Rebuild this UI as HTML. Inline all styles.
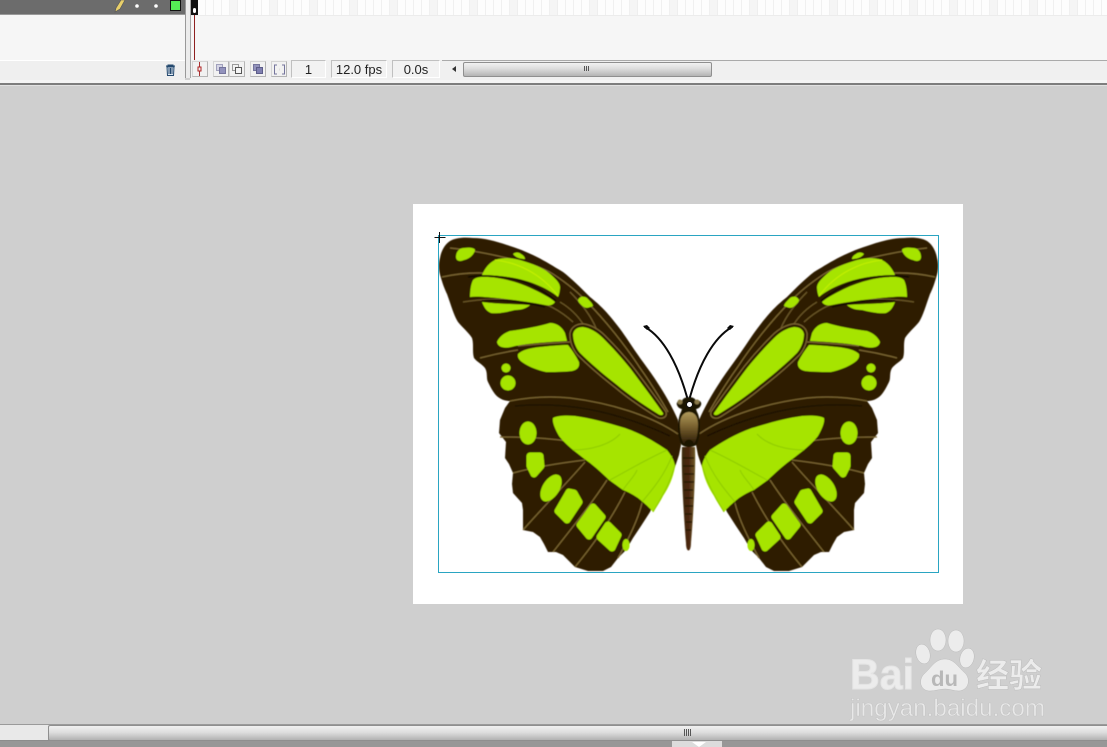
<!DOCTYPE html>
<html><head><meta charset="utf-8"><style>
html,body{margin:0;padding:0;width:1107px;height:747px;overflow:hidden;background:#cfcfcf;font-family:"Liberation Sans","Noto Sans CJK SC",sans-serif}
div{position:absolute;box-sizing:border-box}
.btn{top:61px;height:16px;width:16px;background:#f1f1f1;border:1px solid #d4d4d4;border-bottom-color:#b4b4b4;border-right-color:#b4b4b4}
.fld{top:60px;height:18px;background:#f2f2f2;border:1px solid #c0c0c0;border-right-color:#fff;border-bottom-color:#fff;font-size:13px;line-height:18px;text-align:center;color:#222}
</style></head><body>
<div style="left:0;top:0;width:1107px;height:61px;background:#f6f6f6"></div>
<div style="left:0;top:0;width:185px;height:15px;background:#6c6c6c;border-bottom:1px solid #999"></div>
<div style="left:190px;top:0;width:917px;height:15px;background:repeating-linear-gradient(90deg,#fdfdfd 0 7px,#f0f0f0 7px 8px)"></div>
<div style="left:198px;top:0;width:909px;height:15px;background:repeating-linear-gradient(90deg,transparent 0 32px,rgba(235,235,235,.45) 32px 40px)"></div>
<div style="left:190px;top:15px;width:917px;height:1px;background:#ececec"></div>
<div style="left:191px;top:0;width:7px;height:15px;background:#111"></div>
<div style="left:193px;top:8px;width:3px;height:5px;border-radius:2px;background:#fff"></div>
<div style="left:194px;top:15px;width:1px;height:45px;background:#8e2020"></div>
<div style="left:0;top:60px;width:185px;height:1px;background:#fff"></div>
<div style="left:0;top:61px;width:185px;height:19px;background:#efefef"></div>
<div style="left:190px;top:60px;width:917px;height:20px;background:#f0f0f0"></div>
<div style="left:442px;top:60px;width:665px;height:1px;background:#aaa"></div>
<div style="left:185px;top:0;width:1px;height:78px;background:#999"></div>
<div style="left:186px;top:0;width:4px;height:78px;background:#ececec"></div>
<div style="left:190px;top:0;width:1px;height:78px;background:#a8a8a8"></div>
<div style="left:0;top:80px;width:1107px;height:3px;background:#f5f5f5"></div>
<div style="left:0;top:83px;width:1107px;height:2px;background:#7e7e7e"></div>
<div style="left:0;top:85px;width:1107px;height:1px;background:#e2e2e2"></div>
<div class="btn" style="left:192px"></div>
<div class="btn" style="left:213px"></div>
<div class="btn" style="left:229px"></div>
<div class="btn" style="left:250px"></div>
<div class="btn" style="left:271px"></div>
<div class="fld" style="left:291px;width:35px">1</div>
<div class="fld" style="left:331px;width:56px">12.0 fps</div>
<div class="fld" style="left:392px;width:48px">0.0s</div>
<div style="left:463px;top:62px;width:249px;height:15px;border:1px solid #8f8f8f;border-radius:2px;background:linear-gradient(#f2f2f2,#dcdcdc 45%,#b4b4b4)"></div>
<div style="left:0;top:724px;width:1107px;height:17px;background:#e9e9e9;border-top:1px solid #9a9a9a;border-bottom:1px solid #8c8c8c"></div>
<div style="left:48px;top:725px;width:1059px;height:16px;border:1px solid #8f8f8f;border-right:0;border-radius:2px 0 0 2px;background:linear-gradient(#f0f0f0,#dedede 45%,#b2b2b2)"></div>
<div style="left:0;top:741px;width:1107px;height:6px;background:#979797"></div>
<div style="left:672px;top:741px;width:50px;height:6px;background:#dcdcdc"></div>
<svg width="1107" height="747" viewBox="0 0 1107 747" style="position:absolute;left:0;top:0">
<defs>
<filter id="soft" x="-5%" y="-5%" width="110%" height="110%"><feGaussianBlur stdDeviation="0.45"/></filter>
<g id="wing">
<path fill="#2e1e06" d="M678 420C670 402 660 385 643 362 632 347 625 335 617 325 607 312 600 305 590 297 580 287 572 279 563 272 553 266 545 261 537 257 527 252 517 248 507 245 495 241 484 238 473 238 463 237 455 238 450 241 444 245 441 252 440 258 438 265 439 272 441 278 443 285 445 290 447 294 451 305 454 316 458 322 463 328 469 333 472 338 474 344 472 352 474 358 477 362 482 364 485 368 488 373 486 378 488 382 491 388 494 394 498 397 502 400 506 401 510 401L505 408 500 420 499 433 506 442 505 458 509 464 513 473 512 484 513 493 522 503 523 510 523 530 533 532 540 537 544 544 548 552 556 552 563 555 569 561 575 567 588 571 603 571 611 567 618 558 626 550 633 538 641 526 650 512 660 492 675 467 679 455 681 445Z"/>
<g fill="none" stroke="#7a6530" stroke-width="1.300">
<path d="M510 401C530 397 550 396 570 398 610 403 650 415 678 434"/>
<path d="M515 406C560 402 610 408 670 436" stroke="#1a1002"/>
<path d="M442 277C460 273 480 272 497 274"/>
<path d="M450 248C470 250 490 254 507 258 525 262 540 266 553 274 565 282 578 292 587 302 605 320 625 345 640 368 650 382 660 398 668 412"/>
<path d="M463 302C480 299 510 298 530 300 548 303 562 312 573 322" stroke="#6a5628"/>
<path d="M560 302C570 308 578 316 583 324M570 292C580 302 590 314 596 328" stroke="#6a5628"/>
<path d="M480 358C495 354 505 352 518 350"/>
<path d="M518 346C535 344 552 343 570 342"/>
<path d="M500 437C525 437 550 438 573 442"/>
<path d="M513 473C535 467 560 463 585 460"/>
<path d="M523 530C545 505 568 482 585 462"/>
<path d="M553 552C572 528 592 503 607 480"/>
<path d="M575 567C593 545 612 518 625 492"/>
<path d="M618 558C628 540 638 520 642 503"/>
</g>
<g fill="none" stroke="#120a00" stroke-width="1.700">
<path d="M468 277C500 272 530 279 556 301"/>
<path d="M482 301C500 299 520 301 545 307"/>
</g>
<path fill="none" stroke="#7a6530" stroke-width="7.500" stroke-linejoin="round" d="M573 334C574 329 578 327 583 327 590 328 597 332 603 338 612 347 622 358 630 368 642 384 654 400 663 413 664 415 661 416 658 414 645 406 630 396 617 385 604 375 590 363 580 353 575 347 573 340 573 334Z"/>
<path fill="none" stroke="#2e1e06" stroke-width="5" stroke-linejoin="round" d="M573 334C574 329 578 327 583 327 590 328 597 332 603 338 612 347 622 358 630 368 642 384 654 400 663 413 664 415 661 416 658 414 645 406 630 396 617 385 604 375 590 363 580 353 575 347 573 340 573 334Z"/>
<g fill="#a6e400">
<path d="M456 257C456 252 459 248 464 248 469 247 475 248 475 250 474 255 469 259 464 260 460 262 456 261 456 257Z"/>
<path d="M513 254C515 252 519 252 521 254 523 255 525 257 525 259 521 259 516 258 513 254Z"/>
<path d="M482 275C485 268 489 263 495 260 503 257 512 258 520 260 533 264 543 268 549 273 555 278 560 283 560 287 560 291 559 295 558 297 552 292 545 288 535 284 520 278 500 275 482 275Z"/>
<path d="M470 297C470 290 471 284 473 280 476 277 480 277 485 277 500 277 520 282 537 291 545 295 552 299 555 302 553 305 550 306 545 305 530 302 515 300 497 298 485 297 477 296 470 297Z"/>
<path d="M482 302C497 304 515 304 530 305 527 308 522 310 515 310 507 312 497 314 491 313 486 311 484 307 482 302Z"/>
<path d="M578 300C580 296 584 296 587 298 590 301 593 304 593 306 590 307 587 309 584 307 581 305 578 302 578 300Z"/>
<path d="M497 342C499 337 504 333 510 331 525 329 540 326 550 323 557 323 562 327 565 333L567 341C550 342 530 343 515 346 506 349 498 348 497 342Z"/>
<path d="M518 354C522 350 530 348 540 347 550 346 560 345 568 345 572 350 576 356 579 362 580 367 577 370 572 371 563 372 553 372 546 372 537 370 530 367 525 364 520 361 517 358 518 354Z"/>
<path d="M573 334C574 329 578 327 583 327 590 328 597 332 603 338 612 347 622 358 630 368 642 384 654 400 663 413 664 415 661 416 658 414 645 406 630 396 617 385 604 375 590 363 580 353 575 347 573 340 573 334Z"/>
<ellipse cx="506" cy="368" rx="4.500" ry="4.500"/>
<ellipse cx="508" cy="383" rx="7.500" ry="7.500"/>
<path d="M553 418C556 416 565 415 575 416 590 418 605 422 625 428 642 434 655 442 667 450 672 456 675 462 675 467 673 478 669 487 663 496 660 502 656 508 653 512 648 506 644 503 638 498 632 494 628 492 623 490 616 485 612 482 609 480 602 473 595 467 590 463 583 458 577 453 573 450 566 444 562 440 559 436 555 429 552 422 553 418Z"/>
<ellipse cx="528" cy="433" rx="8.500" ry="11.500"/>
<ellipse cx="551" cy="488" rx="8.500" ry="15" transform="rotate(32 551 488)"/>
</g>
<g fill="#a6e400" stroke="#a6e400" stroke-width="7" stroke-linejoin="round">
<path d="M530 456h10l1 10-7 8-4-8z"/>
<path d="M558 511l11-19 5 1 5 9-12 18z"/>
<path d="M580 525l13-18 9 10-13 19z"/>
<path d="M600 537l8-12 10 10-6 13z"/>
</g>
<ellipse cx="626" cy="545" rx="3.600" ry="6" fill="#a6e400"/>
<g fill="none" stroke="#8fcb00" stroke-width="1">
<path d="M573 450C590 450 610 445 620 434"/>
<path d="M610 480C625 472 645 460 667 450"/>
<path d="M623 490C628 482 635 476 637 470"/>
<path d="M642 502C652 490 664 476 672 456"/>
<path d="M653 512C660 500 670 484 675 465"/>
</g>
<path fill="none" stroke="#c4f000" stroke-width="1" d="M495 260C515 262 540 272 558 296"/>
</g>
<linearGradient id="th" x1="0" x2="0" y1="0" y2="1"><stop offset="0" stop-color="#b09a5a"/><stop offset=".45" stop-color="#7a6230"/><stop offset="1" stop-color="#2a1b05"/></linearGradient>
<linearGradient id="ab" x1="0" x2="1" y1="0" y2="0"><stop offset="0" stop-color="#3e2a0c"/><stop offset=".5" stop-color="#4a2610"/><stop offset="1" stop-color="#6e5a28"/></linearGradient>
</defs>
<!-- timeline icons -->
<path d="M115 12l1-4 5-8h4l-5 9z" fill="#e8cf6a" stroke="#555" stroke-width=".6"/>
<circle cx="137" cy="6" r="1.800" fill="#fff"/><circle cx="156" cy="6" r="1.800" fill="#fff"/>
<rect x="170.500" y=".5" width="10" height="10" fill="#55ee55" stroke="#111"/>
<path d="M166 66h9M168 66v-1h5v1M167 67h7l-.5 8.500h-6zM169 68v6M170.500 68v6M172 68v6" fill="#dfe8f2" stroke="#24496e" stroke-width="1"/>
<path d="M199.500 62v14" stroke="#a83030"/><rect x="198" y="67" width="3" height="4" fill="#eee" stroke="#b02020"/>
<rect x="216.500" y="64.500" width="6" height="6" fill="#d4d4e4" stroke="#a0a0bc"/><rect x="219.500" y="67.500" width="6" height="6" fill="#9292bc" stroke="#74749c"/>
<rect x="232.500" y="64.500" width="6" height="6" fill="none" stroke="#999"/><rect x="235.500" y="67.500" width="6" height="6" fill="#f4f4f4" stroke="#555"/>
<rect x="253.500" y="64.500" width="6" height="6" fill="#9292bc" stroke="#74749c"/><rect x="256.500" y="67.500" width="6" height="6" fill="#7f7fb0" stroke="#5c5c88"/>
<path d="M277 65h-2.500v9h2.500M282 65h2.500v9H282" fill="none" stroke="#74749c"/><path d="M279.500 69.500h.1" stroke="#333" stroke-width="2"/>
<path d="M452 69l4-3v6z" fill="#333"/>
<path d="M584.500 66v5M586.500 66v5M588.500 66v5" stroke="#555"/>
<path d="M684.500 729v7M686.500 729v7M688.500 729v7M690.500 729v7" stroke="#555"/>
<path d="M692 742h14l-7 5z" fill="#fff"/>
<!-- stage -->
<rect x="413" y="204" width="550" height="400" fill="#fff"/>
<g filter="url(#soft)">
<use href="#wing"/>
<use href="#wing" transform="translate(1377 0) scale(-1 1)"/>
<path d="M682 447C681 470 684 520 686 543 686 553 691 553 691 543 693 520 696 470 695 447Z" fill="url(#ab)"/>
<path d="M683 458h11M683 466h11M684 474h10M684 482h10M684 490h9M685 498h8M685 506h8M685 514h7M686 522h6M686 530h5" stroke="#1e1304" stroke-width="1.200"/>
<path d="M689 397c-5 0-7 3-7 4-4-2-6 2-5 4 1 3 4 4 5 4l-1 3c-4 7-4 24 0 32 3 4 13 4 16 0 4-8 4-25 0-32l-1-3c1 0 4-1 5-4 1-2-1-6-5-4 0-1-2-4-7-4z" fill="#1e1404"/>
<path d="M680 424c0-8 4-12 9-12s9 4 9 12c0 8-1 16-4 20-2-6-8-6-10 0-3-4-4-12-4-20z" fill="url(#th)"/>
<circle cx="680" cy="402" r="2.500" fill="#8a7a48"/><circle cx="697" cy="402" r="2.500" fill="#8a7a48"/>
</g>
<path fill="none" stroke="#0a0a0a" stroke-width="2" stroke-linecap="round" d="M645 327C664 338 678 365 687 397M732 327C713 338 699 365 690 397"/>
<path fill="#0a0a0a" d="M643 326l4-1 3 3-3 2zM734 326l-4-1-3 3 3 2z"/>
<circle cx="689.500" cy="404.500" r="3" fill="#fff" stroke="#111" stroke-width="1"/>
<rect x="438.500" y="235.500" width="500" height="337" fill="none" stroke="#2aa5c2"/>
<path d="M439.500 232v11M434.500 237.500h11" stroke="#111"/>
<!-- watermark -->
<g fill="#ececec" stroke="#b4b4b4" stroke-width=".4">
<ellipse cx="938" cy="640" rx="8" ry="11"/><ellipse cx="956" cy="641" rx="8" ry="11"/>
<ellipse cx="923" cy="654" rx="7" ry="10" transform="rotate(-15 923 654)"/><ellipse cx="967" cy="658" rx="7" ry="10" transform="rotate(15 967 658)"/>
<path d="M945 659c9 0 13 8 20 14 6 6 4 17-6 18-5 0-9-2-14-2s-10 2-15 2c-10 0-12-11-6-17 7-6 11-15 21-15z"/>
</g>
<text x="931" y="686" font-family="Liberation Sans" font-weight="bold" font-size="21" fill="#b8b8b8" textLength="27" lengthAdjust="spacingAndGlyphs">du</text>
<text x="850" y="689" font-family="Liberation Sans" font-weight="bold" font-size="43" fill="#ececec" stroke="#e4e4e4" stroke-width="1" textLength="64" lengthAdjust="spacingAndGlyphs">Bai</text>
<text x="976" y="687" font-family="Noto Sans CJK SC,sans-serif" font-weight="bold" font-size="33" fill="#ececec" stroke="#b8b8b8" stroke-width=".4">经验</text>
<text x="850" y="716" font-family="Liberation Sans" font-size="24" fill="#e8e8e8" stroke="#b8b8b8" stroke-width=".3" textLength="195" lengthAdjust="spacingAndGlyphs">jingyan.baidu.com</text>
</svg>
</body></html>
